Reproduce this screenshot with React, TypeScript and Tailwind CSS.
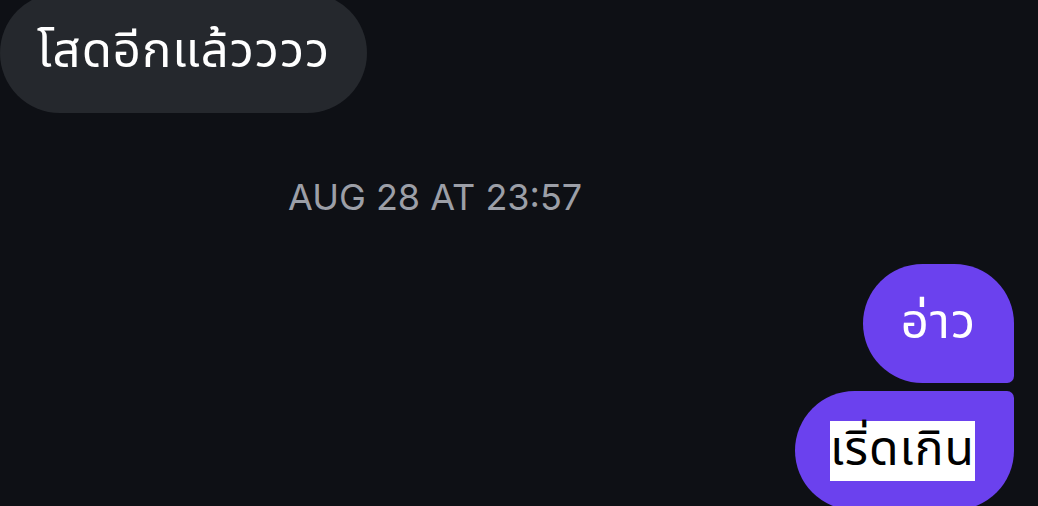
export default function App() {
  return (
    <div className="w-[1038px] h-[506px] overflow-hidden bg-[#0e1015] flex flex-col font-['Noto_Sans_Thai','Noto_Sans',sans-serif]">
      {/* received */}
      <div className="shrink-0 self-start -mt-[7px] h-[120px] px-[37px] flex items-center rounded-[60px] bg-[#25282d] text-white text-[49px] tracking-[1px]">
        โสดอีกแล้วววว
      </div>

      {/* timestamp */}
      <div className="shrink-0 mt-[64px] pl-[288px] text-[36px] leading-[40px] text-[#9c9fa7] font-['Inter','Liberation_Sans',sans-serif]">
        AUG 28 AT 23:57
      </div>

      {/* sent */}
      <div className="shrink-0 mt-[47px] self-end mr-[24px] flex flex-col items-end gap-[8px]">
        <div className="shrink-0 h-[119px] px-[38px] flex items-center bg-[#6b41ee] text-white text-[49px] tracking-[1px] rounded-l-[60px] rounded-tr-[60px] rounded-br-[7px]">
          อ่าว
        </div>
        <div className="shrink-0 h-[119px] pl-[35px] pr-[39px] flex items-center bg-[#6b41ee] text-[48px] tracking-[1px] rounded-l-[60px] rounded-tr-[7px] rounded-br-[60px]">
          <span className="bg-white text-black leading-[60px]">เริ่ดเกิน</span>
        </div>
      </div>
    </div>
  );
}
